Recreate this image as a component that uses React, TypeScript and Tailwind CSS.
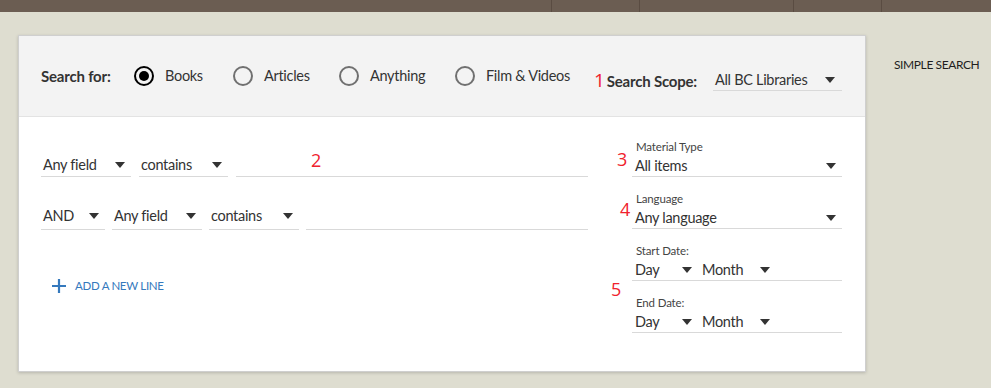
const font = { fontFamily: "Lato, 'Noto Sans', sans-serif" }
const numFont = { fontFamily: "'Open Sans', sans-serif" }

function Caret() {
  return (
    <svg width="10" height="6" viewBox="0 0 10 6" className="shrink-0">
      <path d="M0 0 H10 L5 6 Z" fill="#333333" />
    </svg>
  )
}

function Radio({ label, checked, width }: { label: string; checked?: boolean; width: string }) {
  return (
    <div className={`flex items-center shrink-0 ${width}`}>
      {checked ? (
        <span className="w-[20px] h-[20px] rounded-full border-[2.5px] border-black flex items-center justify-center">
          <span className="w-[10px] h-[10px] rounded-full bg-black" />
        </span>
      ) : (
        <span className="w-[20px] h-[20px] rounded-full border-2 border-[#707070]" />
      )}
      <span className="ml-[11px] text-[14.5px] tracking-[-0.3px] text-[#333]">{label}</span>
    </div>
  )
}

function Select({ value, width, pb = "pb-0" }: { value: string; width: string; pb?: string }) {
  return (
    <div className={`${width} h-[29px] shrink-0 border-b border-[#d9d9d9] flex items-end ${pb}`}>
      <div className="w-full h-[20px] flex items-center justify-between pl-[2px] pr-[6px]">
        <span className="text-[14.5px] tracking-[-0.3px] leading-[20px] text-[#333]">{value}</span>
        <Caret />
      </div>
    </div>
  )
}

function Num({ n, className }: { n: string; className: string }) {
  return (
    <span className={`absolute text-[18px] leading-[18px] text-[#f0222e] ${className}`} style={numFont}>
      {n}
    </span>
  )
}

function Label({ text }: { text: string }) {
  return <div className="text-[11.5px] tracking-[-0.15px] leading-[15px] text-[#444] pl-[4px]">{text}</div>
}

function Field({ label, value }: { label: string; value: string }) {
  return (
    <div>
      <Label text={label} />
      <div className="h-[23px] border-b border-[#d9d9d9] flex items-end">
        <div className="w-full h-[20px] flex items-center justify-between pl-[3px] pr-[6px]">
          <span className="text-[14.5px] tracking-[-0.3px] leading-[20px] text-[#333]">{value}</span>
          <Caret />
        </div>
      </div>
    </div>
  )
}

function DateField({ label }: { label: string }) {
  return (
    <div>
      <Label text={label} />
      <div className="h-[23px] border-b border-[#d9d9d9] flex items-end">
        <div className="w-[66px] h-[20px] flex items-center justify-between pl-[3px] pr-[6px]">
          <span className="text-[14.5px] tracking-[-0.3px] leading-[20px] text-[#333]">Day</span>
          <Caret />
        </div>
        <div className="w-[76px] ml-[2px] h-[20px] flex items-center justify-between pl-[2px] pr-[6px]">
          <span className="text-[14.5px] tracking-[-0.3px] leading-[20px] text-[#333]">Month</span>
          <Caret />
        </div>
      </div>
    </div>
  )
}

export default function App() {
  return (
    <div className="w-[991px] h-[388px] bg-[#deddd0] overflow-hidden" style={font}>
      {/* top nav strip */}
      <div className="h-[12px] bg-[#6b5d52] flex">
        <div className="w-[552px] border-r border-[#5a4c42]" />
        <div className="w-[88px] border-r border-[#5a4c42]" />
        <div className="w-[154px] border-r border-[#5a4c42]" />
        <div className="w-[88px] border-r border-[#5a4c42]" />
      </div>

      <div className="flex pl-[18px] pt-[23px]">
        {/* search card */}
        <div className="w-[848px] bg-white border border-[#cfcfcf] shadow-[0_1px_3px_rgba(0,0,0,0.18)]">
          {/* search for */}
          <div className="h-[81px] bg-[#f3f3f3] border-b border-[#e3e3e3] flex items-center pl-[22px]">
            <span className="w-[93px] shrink-0 text-[15px] tracking-[-0.2px] font-bold text-[#333]">Search for:</span>
            <Radio label="Books" checked width="w-[99px]" />
            <Radio label="Articles" width="w-[106px]" />
            <Radio label="Anything" width="w-[116px]" />
            <Radio label="Film & Videos" width="w-[132px]" />
            <div className="self-start mt-[34px] flex items-end h-[21px]">
              <div className="w-[126px] h-[20px] shrink-0 flex items-center justify-end pr-[16px]">
                <span className="text-[19px] leading-[18px] text-[#f0222e] mr-[2px] -mt-[2px]" style={numFont}>
                  1
                </span>
                <span className="text-[15px] tracking-[-0.2px] font-bold text-[#333]">Search Scope:</span>
              </div>
              <div className="w-[129px] shrink-0 h-[21px] border-b border-[#d9d9d9] flex items-center justify-between pl-[2px] pr-[7px]">
                <span className="text-[14.5px] tracking-[-0.3px] leading-[20px] text-[#333]">All BC Libraries</span>
                <Caret />
              </div>
            </div>
          </div>

          {/* query body */}
          <div className="flex pl-[22px] pr-[23px] pb-[38px]">
            <div className="w-[547px] pt-[31px]">
              <div className="flex gap-[8px]">
                <Select value="Any field" width="w-[90px]" pb="pb-[1px]" />
                <Select value="contains" width="w-[89px]" pb="pb-[1px]" />
                <div className="relative flex-1 h-[29px] border-b border-[#d9d9d9]">
                  <Num n="2" className="left-[75px] top-[3px]" />
                </div>
              </div>
              <div className="flex gap-[7px] mt-[24px]">
                <Select value="AND" width="w-[64px]" pb="pb-[3px]" />
                <Select value="Any field" width="w-[90px]" pb="pb-[3px]" />
                <Select value="contains" width="w-[90px]" pb="pb-[3px]" />
                <div className="flex-1 h-[29px] border-b border-[#d9d9d9]" />
              </div>
              <div className="flex items-center ml-[11px] mt-[46px] h-[20px] text-[#3579bd]">
                <svg width="14" height="14" viewBox="0 0 14 14">
                  <path d="M7 0 V14 M0 7 H14" stroke="#3579bd" strokeWidth="2.2" />
                </svg>
                <span className="ml-[9px] text-[11.5px] tracking-[-0.3px]">ADD A NEW LINE</span>
              </div>
            </div>

            <div className="w-[210px] ml-[44px] pt-[22px] flex flex-col gap-[14px]">
              <div className="relative">
                <Num n="3" className="-left-[15px] top-[11px]" />
                <Field label="Material Type" value="All items" />
              </div>
              <div className="relative">
                <Num n="4" className="-left-[12px] top-[9px]" />
                <Field label="Language" value="Any language" />
              </div>
              <div className="relative">
                <Num n="5" className="-left-[21px] top-[37px]" />
                <DateField label="Start Date:" />
              </div>
              <DateField label="End Date:" />
            </div>
          </div>
        </div>

        <div className="ml-[28px] mt-[22px] text-[12px] tracking-[-0.4px] leading-[15px] text-[#1f1f1f] whitespace-nowrap">
          SIMPLE SEARCH
        </div>
      </div>
    </div>
  )
}
